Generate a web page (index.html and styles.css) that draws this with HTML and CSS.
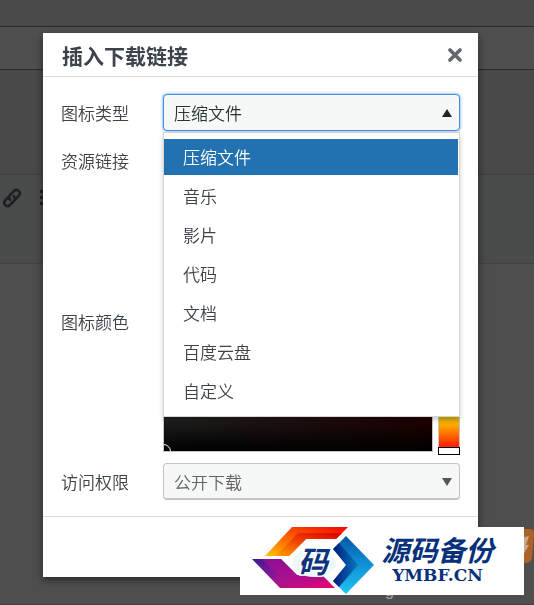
FILE: index.html
```
<!DOCTYPE html>
<html lang="zh-CN">
<head>
    <meta charset="UTF-8">
    <meta name="viewport" content="width=device-width, initial-scale=1.0">
    <title>插入下载链接</title>
    <link rel="stylesheet" href="styles.css">
</head>
<body>
    <!-- Editor page behind the dialog -->
    <div class="page">
        <div class="page-head"></div>
        <div class="page-title"></div>
        <div class="page-tabs"></div>
        <div class="toolbar">
            <svg class="tool-icon" viewBox="0 0 20 20" aria-hidden="true">
                <g fill="none" stroke="#1d2023" stroke-width="2.6" stroke-linecap="round">
                    <path d="M8.2 11.8 C6.6 10.2 6.8 8.2 8.2 6.8 L12.3 2.8 C15 .2 19.6 4.4 17 7.4 L13.6 10.8"/>
                    <path d="M11.8 8.2 C13.4 9.8 13.2 11.8 11.8 13.2 L7.7 17.2 C5 19.8 .4 15.6 3 12.6 L6.4 9.2"/>
                </g>
            </svg>
            <svg class="tool-icon" viewBox="0 0 20 20" aria-hidden="true">
                <path d="M0 2h3v3H0zM0 8h3v3H0zM0 14h3v3H0zM6 2h13v2H6zM6 8h13v2H6zM6 14h13v2H6z" fill="#1d2023"/>
            </svg>
        </div>
        <div class="page-content">
            <svg class="ime-icon" viewBox="0 0 36 36" aria-hidden="true">
                <path d="M7 0 H31 Q37 0 36 6 L34 29 Q33 34 27 34 H0 V6 Q1 0 7 0 Z" fill="#ad6228"/>
                <path d="M19 10 L31 7 L28 16 L31 16 L24 28 L26 19 L21 19 L25 11 L19 13 Z" fill="#c7a78d"/>
            </svg>
        </div>
        <div class="page-foot">g</div>
    </div>

    <div class="overlay">
        <form class="modal" role="dialog" aria-labelledby="modalTitle">
            <div class="modal-header">
                <h1 id="modalTitle">插入下载链接</h1>
                <button type="button" class="close" aria-label="关闭">
                    <svg viewBox="0 0 14 14" width="14" height="14" aria-hidden="true">
                        <path d="M2 2 L12 12 M12 2 L2 12" stroke="#646970" stroke-width="3.6" stroke-linecap="round"/>
                    </svg>
                </button>
            </div>

            <div class="modal-body">
                <div class="form-row">
                    <label for="iconType">图标类型</label>
                    <div class="select-box open">
                        <select id="iconType" name="iconType">
                            <option>压缩文件</option>
                            <option>音乐</option>
                            <option>影片</option>
                            <option>代码</option>
                            <option>文档</option>
                            <option>百度云盘</option>
                            <option>自定义</option>
                        </select>
                        <div class="menu">
                            <button type="button" class="active">压缩文件</button>
                            <button type="button">音乐</button>
                            <button type="button">影片</button>
                            <button type="button">代码</button>
                            <button type="button">文档</button>
                            <button type="button">百度云盘</button>
                            <button type="button">自定义</button>
                        </div>
                    </div>
                </div>

                <div class="form-row">
                    <label for="link">资源链接</label>
                    <input type="text" id="link" name="link">
                </div>

                <div class="form-row">
                    <span class="label">图标颜色</span>
                    <div class="picker">
                        <div class="shade"><span class="shade-ring"></span></div>
                        <div class="hue"><span class="hue-handle"></span></div>
                    </div>
                </div>

                <div class="form-row">
                    <label for="access">访问权限</label>
                    <div class="select-box">
                        <select id="access" name="access">
                            <option>公开下载</option>
                        </select>
                    </div>
                </div>
            </div>

            <div class="modal-footer"></div>
        </form>
    </div>

    <!-- Site badge -->
    <div class="badge">
        <svg class="badge-logo" viewBox="0 0 124 68" aria-hidden="true">
            <defs>
                <linearGradient id="warm" x1="0" y1="1" x2="1" y2="0">
                    <stop offset="0" stop-color="#ffc400"/>
                    <stop offset=".4" stop-color="#ff6a00"/>
                    <stop offset="1" stop-color="#f00505"/>
                </linearGradient>
                <linearGradient id="warmInner" x1="0" y1="1" x2="1" y2="0">
                    <stop offset="0" stop-color="#ff9d00"/>
                    <stop offset=".5" stop-color="#ef3f00"/>
                    <stop offset="1" stop-color="#d90000"/>
                </linearGradient>
                <linearGradient id="pink" x1="0" y1="0" x2="1" y2="1">
                    <stop offset="0" stop-color="#3d1998"/>
                    <stop offset=".5" stop-color="#9c168f"/>
                    <stop offset="1" stop-color="#f00072"/>
                </linearGradient>
                <linearGradient id="blue" x1="0" y1="0" x2="0" y2="1">
                    <stop offset="0" stop-color="#0757a5"/>
                    <stop offset=".5" stop-color="#1190d5"/>
                    <stop offset="1" stop-color="#20c4f5"/>
                </linearGradient>
                <linearGradient id="navy" x1="0" y1="0" x2="1" y2="0">
                    <stop offset="0" stop-color="#001a7c"/>
                    <stop offset="1" stop-color="#087abd"/>
                </linearGradient>
            </defs>
            <path d="M20 29 L47 0 H103 L91 12 H61 L44 29 Z" fill="url(#warm)"/>
            <path d="M31 29 L53 6 H81 L97 6 L91 12 H61 L44 29 Z" fill="url(#warmInner)"/>
            <path d="M7 32 H36 L52 48 H77 L90 61 H35 Z" fill="url(#pink)"/>
            <path d="M17 32 H36 L52 48 H77 L84 55 H40 Z" fill="#b30b8f" opacity=".6"/>
            <path d="M101 9 L129 38 L101 67 L88 54 L105 38 L88 22 Z" fill="url(#blue)"/>
            <path d="M94 16 L113 38 L94 60 L88 54 L101 38 L88 22 Z" fill="url(#navy)"/>
            <ellipse cx="69" cy="36" rx="22" ry="14" fill="#eef8fd"/>
            <text class="logo-char" x="53" y="46">码</text>
        </svg>
        <div class="badge-text">
            <span class="badge-name">源码备份</span>
            <span class="badge-domain">YMBF.CN</span>
        </div>
    </div>
</body>
</html>
```
FILE: styles.css
```
* { box-sizing: border-box; }
body { margin: 0; min-height: 100vh; background: #4e4e4e; color: #3c434a; font-family: "Noto Sans CJK SC", sans-serif; font-size: 17px; font-weight: 350; overflow: hidden; }
select, input, button { font: inherit; color: inherit; }

/* page behind */
.page { display: flex; flex-direction: column; height: 100vh; }
.page-head { height: 27px; background: #4a4a4a; border-bottom: 1px solid #2b2b2b; }
.page-title { height: 43px; background: #4f4f4f; border-bottom: 1px solid #2b2b2b; }
.page-tabs { height: 105px; background: #494949; border-bottom: 1px solid #3d4040; }
.toolbar { display: flex; gap: 18px; height: 89px; padding: 13px 2px; background: #4a4c4b; border-bottom: 1px solid #414342; }
.tool-icon { width: 20px; height: 20px; flex: none; }
.page-content { display: flex; flex: 1; align-items: flex-end; justify-content: flex-end; padding-bottom: 18px; }
.ime-icon { width: 36px; height: 36px; }
.page-foot { height: 22px; padding-right: 140px; border-bottom: 1px solid #473d40; color: #a0a0a0; font-family: "Liberation Sans", sans-serif; font-size: 16px; line-height: 16px; text-align: right; }

/* dialog */
.overlay { position: fixed; inset: 0; padding: 33px 56px 28px 43px; }
.modal { display: flex; flex-direction: column; height: 100%; background: #fff; box-shadow: 0 3px 8px rgba(0, 0, 0, .5); }
.modal-header { display: flex; align-items: center; justify-content: space-between; height: 44px; padding: 0 16px 0 19px; border-bottom: 1px solid #dcdcde; }
.modal-header h1 { margin: 0; font-size: 21px; line-height: 42px; font-weight: 700; }
.close { display: flex; padding: 0; border: 0; background: none; cursor: pointer; }
.modal-body { display: flex; flex-direction: column; gap: 11px; padding: 17px 18px 16px; }
.modal-footer { flex: 1; border-top: 1px solid #dcdcde; }

.form-row { display: grid; grid-template-columns: 102px 1fr; align-items: center; }
.form-row label, .label { line-height: 37px; }
.form-row input { width: 100%; height: 37px; padding: 0 12px; border: 1px solid #c3c4c7; border-radius: 3px; }

.select-box { position: relative; }
.select-box select { display: block; width: 100%; height: 37px; padding: 0 10px; border: 1px solid #c3c4c7; border-bottom-width: 2px; border-radius: 4px; background: #f6f7f7; color: #646464; appearance: none; }
.select-box::after { content: ""; position: absolute; right: 8px; top: 15px; border: 5px solid transparent; border-top: 8px solid #50575e; border-bottom: 0; pointer-events: none; }
.select-box.open select { border: 1px solid #4a90d9; box-shadow: 0 0 3px #4a90d9; color: #2c3338; outline: 0; }
.select-box.open::after { border-top: 0; border-bottom: 8px solid #1d2327; }

.menu { position: absolute; z-index: 2; top: 100%; left: 0; right: 0; display: flex; flex-direction: column; gap: 3px; margin-top: 1px; padding: 6px 1px 7px 0; border: 1px solid #d5d6d8; background: #fff; box-shadow: 0 3px 5px rgba(0, 0, 0, .2); }
.menu button { height: 36px; padding: 0 19px; border: 0; background: none; line-height: 36px; text-align: left; cursor: pointer; }
.menu button.active { background: #2271b1; color: #fff; }

/* colour picker */
.picker { display: flex; gap: 5px; height: 262px; }
.shade { position: relative; flex: 1; overflow: hidden; border: 1px solid #c3c4c7; background: linear-gradient(to top, #000, transparent), linear-gradient(to right, #fff, red); }
.shade-ring { position: absolute; left: -8px; bottom: -8px; width: 15px; height: 15px; border: 1px solid #fff; border-radius: 50%; }
.hue { position: relative; width: 22px; border: 1px solid #c3c4c7; background: linear-gradient(to top, red, #fa0 10%, #9b0 17%, #0f0 33%, #0ff 50%, #00f 67%, #f0f 83%, red); }
.hue-handle { position: absolute; left: -1px; right: -1px; bottom: -4px; height: 8px; border: 1px solid #000; background: #fff; }

/* badge */
.badge { position: fixed; right: 10px; bottom: 10px; display: flex; width: 284px; height: 68px; background: #fff; }
.badge-logo { width: 124px; height: 68px; margin-left: 5px; flex: none; overflow: visible; }
.logo-char { fill: #0b347f; stroke: #fff; stroke-width: 3px; paint-order: stroke; font-size: 30px; font-style: italic; font-weight: 700; }
.badge-text { display: flex; flex: 1; flex-direction: column; align-items: center; padding: 6px 18px 0 0; color: #08317b; font-weight: 700; }
.badge-name { font-size: 28px; line-height: 32px; font-style: italic; }
.badge-domain { font-family: "DejaVu Serif", serif; font-size: 17px; line-height: 20px; }
```
